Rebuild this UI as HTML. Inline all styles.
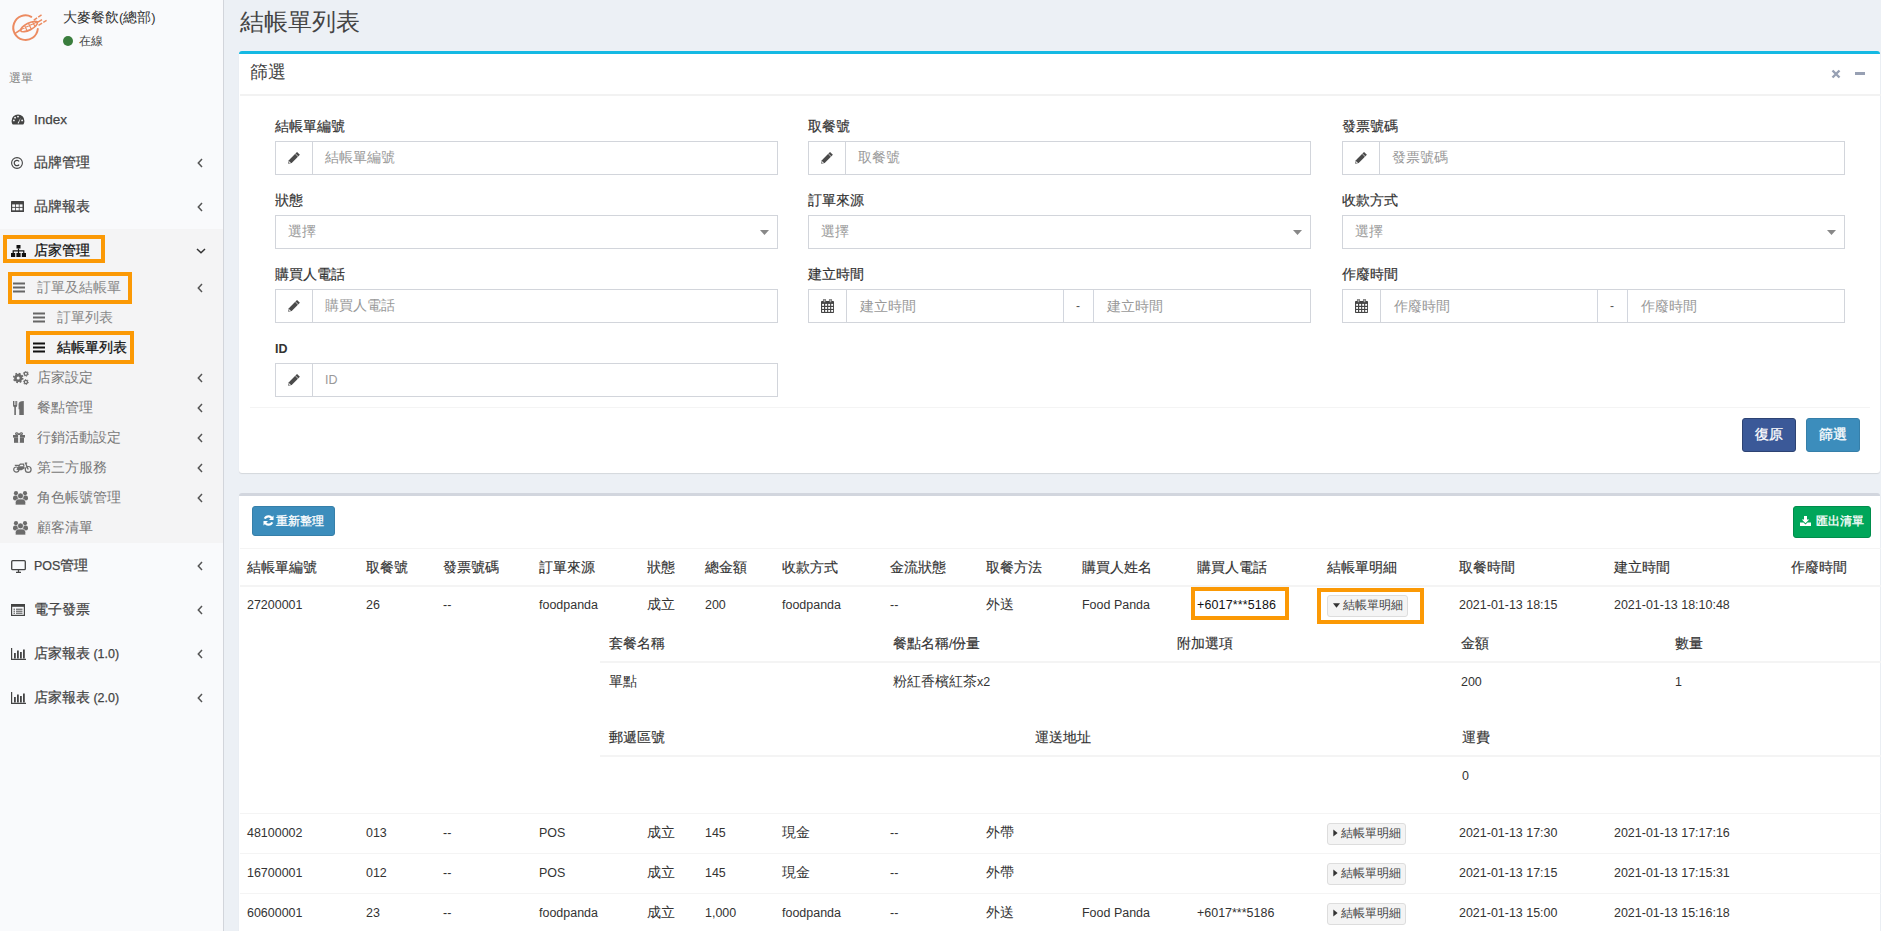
<!DOCTYPE html><html><head><meta charset="utf-8"><style>*{box-sizing:border-box;margin:0;padding:0}
html,body{width:1881px;height:931px;overflow:hidden}
body{font-family:"Liberation Sans",sans-serif;font-size:13.5px;color:#333;background:#ecf0f5;position:relative}
.abs{position:absolute}
.t{white-space:nowrap}
.L{font-size:0.925em}
.B{-webkit-text-stroke:0.3px currentColor}
#sb{position:absolute;left:0;top:0;width:224px;height:931px;background:#f9fafc;border-right:1px solid #d2d5db}
.sbact{position:absolute;left:0;top:229px;width:223px;height:314px;background:#f4f4f5}
.ob{position:absolute;border:4px solid #fb9905}
.box{position:absolute;background:#fff;border-radius:3px;box-shadow:0 1px 1px rgba(0,0,0,.1)}
.lbl{position:absolute;font-size:13.5px;color:#333;line-height:16px;-webkit-text-stroke:0.18px currentColor}
.inp{position:absolute;height:34px;border:1px solid #d2d5db;background:#fff}
.inp .add{position:absolute;left:0;top:0;width:37px;height:32px;border-right:1px solid #d2d5db}
.ph{position:absolute;color:#999;font-size:13.5px;line-height:16px}
.btn{position:absolute;color:#fff;border-radius:3px;font-size:13.5px;text-align:center}
.th{position:absolute;font-size:13.5px;color:#333;line-height:16px;-webkit-text-stroke:0.15px currentColor}
.td{position:absolute;font-size:13.5px;color:#333;line-height:16px}
.hl{position:absolute;height:1px;background:#f4f4f4}
.dbtn{position:absolute;width:81px;height:22px;border:1px solid #ddd;background:#f4f4f4;border-radius:3px}
.lbl .L{font-weight:bold;-webkit-text-stroke:0}
</style></head><body>
<div id="sb">
<div class="sbact"></div>
<svg class="abs" style="left:8px;top:9px" width="42" height="36" viewBox="0 0 42 36"><g fill="none" stroke="#ec8b61" stroke-linecap="round"><path d="M29.8 20 A12.3 12.3 0 1 1 23.3 7.8" stroke-width="2"/><path d="M7.5 24.2L13 20.5" stroke-width="1.6"/><ellipse cx="21" cy="17.6" rx="9.2" ry="3.4" transform="rotate(-27 21 17.6)" stroke-width="1.7"/><path d="M13 20.5L30 12.5M16.5 16.5L19 21.5M20.5 14.5L23 19.5M24.5 12.8L26.8 17" stroke-width="1.2"/><path d="M25.8 11.2L34.5 5.2" stroke-width="1.5" stroke-dasharray="4 1.4" stroke-linecap="butt"/><path d="M29.5 13.4L34 10.6" stroke-width="1.5" stroke-linecap="butt"/><path d="M30.5 16.3L38.6 11.4" stroke-width="1.5" stroke-dasharray="4.2 1.4" stroke-linecap="butt"/></g></svg>
<div class="abs t" style="left:63px;top:9px;font-size:14px;color:#333;line-height:17px">大麥餐飲<span class="L">(</span>總部<span class="L">)</span></div>
<div class="abs" style="left:63px;top:36px;width:10px;height:10px;border-radius:50%;background:#3a7d3d"></div>
<div class="abs t" style="left:79px;top:33px;font-size:12px;color:#444;line-height:16px">在線</div>
<div class="abs t" style="left:9px;top:70px;font-size:12px;color:#848484;line-height:16px">選單</div>
<div class="abs t" style="left:34px;top:112px;font-size:13.5px;line-height:16px;color:#444;-webkit-text-stroke:0.25px currentColor"><span style="font-size:14.6px;position:relative;top:-1px"><span class="L">Index</span></span></div>
<div class="abs" style="left:11px;top:114px;line-height:0"><svg width="14" height="11" viewBox="0 0 15 12"><path d="M7.5 0.5A7 7 0 0 0 0.5 7.5c0 1.6.5 3 1.4 4h11.2c.9-1 1.4-2.4 1.4-4A7 7 0 0 0 7.5.5z" fill="#444"/><circle cx="3" cy="7" r="1" fill="#f9fafc"/><circle cx="4.3" cy="4" r="1" fill="#f9fafc"/><circle cx="7.5" cy="2.8" r="1" fill="#f9fafc"/><circle cx="12" cy="7" r="1" fill="#f9fafc"/><path d="M7 10L10.5 4.2L8.2 10.3z" fill="#f9fafc"/></svg></div>
<div class="abs t" style="left:34px;top:155px;font-size:13.5px;line-height:16px;color:#444;-webkit-text-stroke:0.25px currentColor">品牌管理</div>
<div class="abs" style="left:11px;top:157px;line-height:0"><svg width="12" height="12" viewBox="0 0 12 12"><circle cx="6" cy="6" r="5.4" fill="none" stroke="#444" stroke-width="1.1"/><path d="M8.1 4.4A2.7 2.7 0 1 0 8.1 7.6" fill="none" stroke="#444" stroke-width="1.2"/></svg></div>
<div class="abs" style="left:197px;top:158px;line-height:0"><svg width="6" height="10" viewBox="0 0 6 10"><path d="M5 1L1.3 5L5 9" fill="none" stroke="#555" stroke-width="1.5"/></svg></div>
<div class="abs t" style="left:34px;top:199px;font-size:13.5px;line-height:16px;color:#444;-webkit-text-stroke:0.25px currentColor">品牌報表</div>
<div class="abs" style="left:11px;top:201px;line-height:0"><svg width="13" height="11" viewBox="0 0 13 11"><rect x="0" y="0" width="13" height="11" rx="0.6" fill="#444"/><rect x="1.2" y="3.4" width="2.9" height="2.5" fill="#f9fafc"/><rect x="1.2" y="6.8" width="2.9" height="2.5" fill="#f9fafc"/><rect x="4.9" y="3.4" width="2.9" height="2.5" fill="#f9fafc"/><rect x="4.9" y="6.8" width="2.9" height="2.5" fill="#f9fafc"/><rect x="8.6" y="3.4" width="2.9" height="2.5" fill="#f9fafc"/><rect x="8.6" y="6.8" width="2.9" height="2.5" fill="#f9fafc"/></svg></div>
<div class="abs" style="left:197px;top:202px;line-height:0"><svg width="6" height="10" viewBox="0 0 6 10"><path d="M5 1L1.3 5L5 9" fill="none" stroke="#555" stroke-width="1.5"/></svg></div>
<div class="abs t" style="left:34px;top:243px;font-size:13.5px;line-height:16px;color:#111;-webkit-text-stroke:0.25px currentColor">店家管理</div>
<div class="abs" style="left:11px;top:245px;line-height:0"><svg width="15" height="12" viewBox="0 0 15 12"><rect x="5.5" y="0" width="4" height="3.5" fill="#111"/><path d="M7.5 3.5V6M2.2 8V5.8H12.8V8M7.5 6V8" stroke="#111" stroke-width="1.2" fill="none"/><rect x="0" y="8" width="4.2" height="4" fill="#111"/><rect x="5.4" y="8" width="4.2" height="4" fill="#111"/><rect x="10.8" y="8" width="4.2" height="4" fill="#111"/></svg></div>
<div class="abs" style="left:196px;top:248px;line-height:0"><svg width="10" height="6" viewBox="0 0 10 6"><path d="M1 1L5 4.7L9 1" fill="none" stroke="#333" stroke-width="1.5"/></svg></div>
<div class="abs t" style="left:37px;top:280px;font-size:13.5px;line-height:16px;color:#888;">訂單及結帳單</div>
<div class="abs" style="left:13px;top:282px;line-height:0"><svg width="12" height="11" viewBox="0 0 12 11"><rect x="0" y="0.5" width="12" height="2" fill="#666"/><rect x="0" y="4.5" width="12" height="2" fill="#666"/><rect x="0" y="8.5" width="12" height="2" fill="#666"/></svg></div>
<div class="abs" style="left:197px;top:283px;line-height:0"><svg width="6" height="10" viewBox="0 0 6 10"><path d="M5 1L1.3 5L5 9" fill="none" stroke="#555" stroke-width="1.5"/></svg></div>
<div class="abs t" style="left:57px;top:310px;font-size:13.5px;line-height:16px;color:#888;">訂單列表</div>
<div class="abs" style="left:33px;top:312px;line-height:0"><svg width="12" height="11" viewBox="0 0 12 11"><rect x="0" y="0.5" width="12" height="2" fill="#666"/><rect x="0" y="4.5" width="12" height="2" fill="#666"/><rect x="0" y="8.5" width="12" height="2" fill="#666"/></svg></div>
<div class="abs t" style="left:57px;top:340px;font-size:13.5px;line-height:16px;color:#111;-webkit-text-stroke:0.25px currentColor">結帳單列表</div>
<div class="abs" style="left:33px;top:342px;line-height:0"><svg width="12" height="11" viewBox="0 0 12 11"><rect x="0" y="0.5" width="12" height="2" fill="#111"/><rect x="0" y="4.5" width="12" height="2" fill="#111"/><rect x="0" y="8.5" width="12" height="2" fill="#111"/></svg></div>
<div class="abs t" style="left:37px;top:370px;font-size:13.5px;line-height:16px;color:#777;">店家設定</div>
<div class="abs" style="left:13px;top:371px;line-height:0"><svg width="16" height="14" viewBox="0 0 16 14"><circle cx="5.2" cy="6.9" r="2.8" fill="none" stroke="#6b6b6b" stroke-width="2.6"/><circle cx="5.2" cy="6.9" r="4.5" fill="none" stroke="#6b6b6b" stroke-width="1.6" stroke-dasharray="1.77 1.77"/><circle cx="12.9" cy="2.7" r="1.6" fill="none" stroke="#6b6b6b" stroke-width="1.3"/><circle cx="12.9" cy="2.7" r="2.5" fill="none" stroke="#6b6b6b" stroke-width="0.9" stroke-dasharray="1.3 1.3"/><circle cx="12.9" cy="11" r="1.6" fill="none" stroke="#6b6b6b" stroke-width="1.3"/><circle cx="12.9" cy="11" r="2.5" fill="none" stroke="#6b6b6b" stroke-width="0.9" stroke-dasharray="1.3 1.3"/></svg></div>
<div class="abs" style="left:197px;top:373px;line-height:0"><svg width="6" height="10" viewBox="0 0 6 10"><path d="M5 1L1.3 5L5 9" fill="none" stroke="#555" stroke-width="1.5"/></svg></div>
<div class="abs t" style="left:37px;top:400px;font-size:13.5px;line-height:16px;color:#777;">餐點管理</div>
<div class="abs" style="left:13px;top:401px;line-height:0"><svg width="11" height="14" viewBox="0 0 11 14"><path d="M0 0h1v4h0.6V0h1v4h0.6V0h1v4c0 1.2-.5 2-1.3 2.3V14H1.3V6.3C.5 6 0 5.2 0 4z" fill="#6b6b6b"/><path d="M6.3 14V8.2H5.6V3.2C5.6 1.2 7.4 0 10.8 0V14z" fill="#6b6b6b"/></svg></div>
<div class="abs" style="left:197px;top:403px;line-height:0"><svg width="6" height="10" viewBox="0 0 6 10"><path d="M5 1L1.3 5L5 9" fill="none" stroke="#555" stroke-width="1.5"/></svg></div>
<div class="abs t" style="left:37px;top:430px;font-size:13.5px;line-height:16px;color:#777;">行銷活動設定</div>
<div class="abs" style="left:13px;top:432px;line-height:0"><svg width="12" height="11" viewBox="0 0 12 11"><path d="M6 3C5 0.6 2.6 0.3 2.6 1.8 2.6 2.8 4.5 3 6 3zM6 3C7 0.6 9.4 0.3 9.4 1.8 9.4 2.8 7.5 3 6 3z" fill="none" stroke="#6b6b6b" stroke-width="1.2"/><rect x="0" y="3" width="12" height="2.6" fill="#6b6b6b"/><rect x="1" y="5.6" width="10" height="5.2" fill="#6b6b6b"/><rect x="5.1" y="3" width="1.8" height="7.8" fill="#f4f4f5"/></svg></div>
<div class="abs" style="left:197px;top:433px;line-height:0"><svg width="6" height="10" viewBox="0 0 6 10"><path d="M5 1L1.3 5L5 9" fill="none" stroke="#555" stroke-width="1.5"/></svg></div>
<div class="abs t" style="left:37px;top:460px;font-size:13.5px;line-height:16px;color:#777;">第三方服務</div>
<div class="abs" style="left:13px;top:462px;line-height:0"><svg width="19" height="11" viewBox="0 0 19 11"><circle cx="3.3" cy="7.6" r="2.6" fill="none" stroke="#6b6b6b" stroke-width="1.2"/><circle cx="15.2" cy="7.4" r="2.9" fill="none" stroke="#6b6b6b" stroke-width="1.2"/><path d="M3.3 7.6L5.5 4.3H11L12 6.3 8.5 8.3H5z" fill="#6b6b6b"/><path d="M1.8 3.3H6.5M11.8 1.2H14.2M12.6 1.2L15.2 7.4M5.5 4.3L7.3 2.2H10.5L11 4.3" fill="none" stroke="#6b6b6b" stroke-width="1.3"/></svg></div>
<div class="abs" style="left:197px;top:463px;line-height:0"><svg width="6" height="10" viewBox="0 0 6 10"><path d="M5 1L1.3 5L5 9" fill="none" stroke="#555" stroke-width="1.5"/></svg></div>
<div class="abs t" style="left:37px;top:490px;font-size:13.5px;line-height:16px;color:#777;">角色帳號管理</div>
<div class="abs" style="left:13px;top:491px;line-height:0"><svg width="15" height="14" viewBox="0 0 15 14"><circle cx="3" cy="2.2" r="2.1" fill="#6b6b6b"/><circle cx="12" cy="2.2" r="2.1" fill="#6b6b6b"/><rect x="0" y="4.6" width="5.2" height="4.8" rx="2.2" fill="#6b6b6b"/><rect x="9.8" y="4.6" width="5.2" height="4.8" rx="2.2" fill="#6b6b6b"/><circle cx="7.5" cy="4.9" r="3" fill="#6b6b6b" stroke="#f4f4f5" stroke-width="0.7"/><path d="M2.3 14V11.3C2.3 9.3 3.8 8 5.8 8H9.2C11.2 8 12.7 9.3 12.7 11.3V14z" fill="#6b6b6b" stroke="#f4f4f5" stroke-width="0.7"/></svg></div>
<div class="abs" style="left:197px;top:493px;line-height:0"><svg width="6" height="10" viewBox="0 0 6 10"><path d="M5 1L1.3 5L5 9" fill="none" stroke="#555" stroke-width="1.5"/></svg></div>
<div class="abs t" style="left:37px;top:520px;font-size:13.5px;line-height:16px;color:#777;">顧客清單</div>
<div class="abs" style="left:13px;top:521px;line-height:0"><svg width="15" height="14" viewBox="0 0 15 14"><circle cx="3" cy="2.2" r="2.1" fill="#6b6b6b"/><circle cx="12" cy="2.2" r="2.1" fill="#6b6b6b"/><rect x="0" y="4.6" width="5.2" height="4.8" rx="2.2" fill="#6b6b6b"/><rect x="9.8" y="4.6" width="5.2" height="4.8" rx="2.2" fill="#6b6b6b"/><circle cx="7.5" cy="4.9" r="3" fill="#6b6b6b" stroke="#f4f4f5" stroke-width="0.7"/><path d="M2.3 14V11.3C2.3 9.3 3.8 8 5.8 8H9.2C11.2 8 12.7 9.3 12.7 11.3V14z" fill="#6b6b6b" stroke="#f4f4f5" stroke-width="0.7"/></svg></div>
<div class="abs t" style="left:34px;top:558px;font-size:13.5px;line-height:16px;color:#444;-webkit-text-stroke:0.25px currentColor"><span class="L">POS</span>管理</div>
<div class="abs" style="left:11px;top:560px;line-height:0"><svg width="15" height="13" viewBox="0 0 15 13"><rect x="0.7" y="0.7" width="13.6" height="9" rx="1" fill="none" stroke="#444" stroke-width="1.3"/><path d="M5 12.5h5M7.5 9.7v2.8" stroke="#444" stroke-width="1.3"/></svg></div>
<div class="abs" style="left:197px;top:561px;line-height:0"><svg width="6" height="10" viewBox="0 0 6 10"><path d="M5 1L1.3 5L5 9" fill="none" stroke="#555" stroke-width="1.5"/></svg></div>
<div class="abs t" style="left:34px;top:602px;font-size:13.5px;line-height:16px;color:#444;-webkit-text-stroke:0.25px currentColor">電子發票</div>
<div class="abs" style="left:11px;top:604px;line-height:0"><svg width="14" height="12" viewBox="0 0 14 12"><rect x="0.6" y="0.6" width="12.8" height="10.8" fill="none" stroke="#444" stroke-width="1.2"/><rect x="0.6" y="0.6" width="12.8" height="2.2" fill="#444"/><path d="M2.5 5.2h1.5M5 5.2h6.5M2.5 7.2h1.5M5 7.2h6.5M2.5 9.2h1.5M5 9.2h6.5" stroke="#444" stroke-width="1"/></svg></div>
<div class="abs" style="left:197px;top:605px;line-height:0"><svg width="6" height="10" viewBox="0 0 6 10"><path d="M5 1L1.3 5L5 9" fill="none" stroke="#555" stroke-width="1.5"/></svg></div>
<div class="abs t" style="left:34px;top:646px;font-size:13.5px;line-height:16px;color:#444;-webkit-text-stroke:0.25px currentColor">店家報表<span class="L"> (1.0)</span></div>
<div class="abs" style="left:11px;top:648px;line-height:0"><svg width="15" height="12" viewBox="0 0 15 12"><path d="M0.6 0V11.4H15" fill="none" stroke="#444" stroke-width="1.2"/><rect x="3" y="5" width="1.8" height="5.5" fill="#444"/><rect x="6" y="2.5" width="1.8" height="8" fill="#444"/><rect x="9" y="4" width="1.8" height="6.5" fill="#444"/><rect x="12" y="1.5" width="1.8" height="9" fill="#444"/></svg></div>
<div class="abs" style="left:197px;top:649px;line-height:0"><svg width="6" height="10" viewBox="0 0 6 10"><path d="M5 1L1.3 5L5 9" fill="none" stroke="#555" stroke-width="1.5"/></svg></div>
<div class="abs t" style="left:34px;top:690px;font-size:13.5px;line-height:16px;color:#444;-webkit-text-stroke:0.25px currentColor">店家報表<span class="L"> (2.0)</span></div>
<div class="abs" style="left:11px;top:692px;line-height:0"><svg width="15" height="12" viewBox="0 0 15 12"><path d="M0.6 0V11.4H15" fill="none" stroke="#444" stroke-width="1.2"/><rect x="3" y="5" width="1.8" height="5.5" fill="#444"/><rect x="6" y="2.5" width="1.8" height="8" fill="#444"/><rect x="9" y="4" width="1.8" height="6.5" fill="#444"/><rect x="12" y="1.5" width="1.8" height="9" fill="#444"/></svg></div>
<div class="abs" style="left:197px;top:693px;line-height:0"><svg width="6" height="10" viewBox="0 0 6 10"><path d="M5 1L1.3 5L5 9" fill="none" stroke="#555" stroke-width="1.5"/></svg></div>
<div class="ob" style="left:3px;top:235px;width:102px;height:28px"></div>
<div class="ob" style="left:8px;top:272px;width:124px;height:32px"></div>
<div class="ob" style="left:26px;top:331px;width:108px;height:33px"></div>
</div>
<div class="abs t" style="left:240px;top:6.5px;font-size:23.7px;line-height:30px;color:#444">結帳單列表</div>
<div class="box" style="left:239px;top:51px;width:1641px;height:422px;border-top:3px solid #14b9e3"></div>
<div class="abs t" style="left:250px;top:61px;font-size:18px;line-height:22px;color:#444">篩選</div>
<div class="abs" style="left:240px;top:94px;width:1641px;height:2px;background:#f2f2f2"></div>
<svg class="abs" style="left:1831px;top:69px" width="10" height="10" viewBox="0 0 10 10"><path d="M1.5 1.5L8.5 8.5M8.5 1.5L1.5 8.5" stroke="#97a0b3" stroke-width="2.4"/></svg>
<div class="abs" style="left:1855px;top:72px;width:10px;height:2.5px;background:#97a0b3"></div>
<div class="lbl t" style="left:275px;top:119px">結帳單編號</div>
<div class="inp" style="left:275px;top:141px;width:503px"><div class="add"></div></div>
<div class="abs" style="left:288px;top:152px;line-height:0"><svg width="12" height="12" viewBox="0 0 12 12"><path d="M9.02 -0.05L11.88 2.75L3.73 11.06L0.2 11.8L0.87 8.26z" fill="#4a4a4a"/><path d="M7.27 1.735L10.13 4.535" stroke="#fff" stroke-width="0.7"/><path d="M1.3 9.2L2.9 10.7L1.6 11L1 10.4z" fill="#fff"/></svg></div>
<div class="ph t" style="left:325px;top:150px">結帳單編號</div>
<div class="lbl t" style="left:808px;top:119px">取餐號</div>
<div class="inp" style="left:808px;top:141px;width:503px"><div class="add"></div></div>
<div class="abs" style="left:821px;top:152px;line-height:0"><svg width="12" height="12" viewBox="0 0 12 12"><path d="M9.02 -0.05L11.88 2.75L3.73 11.06L0.2 11.8L0.87 8.26z" fill="#4a4a4a"/><path d="M7.27 1.735L10.13 4.535" stroke="#fff" stroke-width="0.7"/><path d="M1.3 9.2L2.9 10.7L1.6 11L1 10.4z" fill="#fff"/></svg></div>
<div class="ph t" style="left:858px;top:150px">取餐號</div>
<div class="lbl t" style="left:1342px;top:119px">發票號碼</div>
<div class="inp" style="left:1342px;top:141px;width:503px"><div class="add"></div></div>
<div class="abs" style="left:1355px;top:152px;line-height:0"><svg width="12" height="12" viewBox="0 0 12 12"><path d="M9.02 -0.05L11.88 2.75L3.73 11.06L0.2 11.8L0.87 8.26z" fill="#4a4a4a"/><path d="M7.27 1.735L10.13 4.535" stroke="#fff" stroke-width="0.7"/><path d="M1.3 9.2L2.9 10.7L1.6 11L1 10.4z" fill="#fff"/></svg></div>
<div class="ph t" style="left:1392px;top:150px">發票號碼</div>
<div class="lbl t" style="left:275px;top:193px">狀態</div>
<div class="inp" style="left:275px;top:215px;width:503px"></div>
<div class="ph t" style="left:288px;top:224px">選擇</div>
<svg class="abs" style="left:760px;top:230px" width="9" height="5" viewBox="0 0 9 5"><path d="M0 0H9L4.5 5z" fill="#888"/></svg>
<div class="lbl t" style="left:808px;top:193px">訂單來源</div>
<div class="inp" style="left:808px;top:215px;width:503px"></div>
<div class="ph t" style="left:821px;top:224px">選擇</div>
<svg class="abs" style="left:1293px;top:230px" width="9" height="5" viewBox="0 0 9 5"><path d="M0 0H9L4.5 5z" fill="#888"/></svg>
<div class="lbl t" style="left:1342px;top:193px">收款方式</div>
<div class="inp" style="left:1342px;top:215px;width:503px"></div>
<div class="ph t" style="left:1355px;top:224px">選擇</div>
<svg class="abs" style="left:1827px;top:230px" width="9" height="5" viewBox="0 0 9 5"><path d="M0 0H9L4.5 5z" fill="#888"/></svg>
<div class="lbl t" style="left:275px;top:267px">購買人電話</div>
<div class="inp" style="left:275px;top:289px;width:503px"><div class="add"></div></div>
<div class="abs" style="left:288px;top:300px;line-height:0"><svg width="12" height="12" viewBox="0 0 12 12"><path d="M9.02 -0.05L11.88 2.75L3.73 11.06L0.2 11.8L0.87 8.26z" fill="#4a4a4a"/><path d="M7.27 1.735L10.13 4.535" stroke="#fff" stroke-width="0.7"/><path d="M1.3 9.2L2.9 10.7L1.6 11L1 10.4z" fill="#fff"/></svg></div>
<div class="ph t" style="left:325px;top:298px">購買人電話</div>
<div class="lbl t" style="left:808px;top:267px">建立時間</div>
<div class="inp" style="left:808px;top:289px;width:503px"><div class="add" style="width:38px"></div></div>
<div class="abs" style="left:1063px;top:290px;width:1px;height:32px;background:#d2d6de"></div>
<div class="abs" style="left:1093px;top:290px;width:1px;height:32px;background:#d2d6de"></div>
<div class="abs" style="left:821px;top:299px;line-height:0"><svg width="13" height="14" viewBox="0 0 13 14"><rect x="0" y="2" width="13" height="12" rx="0.8" fill="#444"/><g fill="#fff"><rect x="1.1" y="4.9" width="1.9" height="1.9"/><rect x="1.1" y="8.0" width="1.9" height="1.9"/><rect x="1.1" y="11.0" width="1.9" height="1.9"/><rect x="4.2" y="4.9" width="1.9" height="1.9"/><rect x="4.2" y="8.0" width="1.9" height="1.9"/><rect x="4.2" y="11.0" width="1.9" height="1.9"/><rect x="7.2" y="4.9" width="1.9" height="1.9"/><rect x="7.2" y="8.0" width="1.9" height="1.9"/><rect x="7.2" y="11.0" width="1.9" height="1.9"/><rect x="10.2" y="4.9" width="1.9" height="1.9"/><rect x="10.2" y="8.0" width="1.9" height="1.9"/><rect x="10.2" y="11.0" width="1.9" height="1.9"/></g><rect x="2.4" y="0" width="2.2" height="3.6" rx="0.8" fill="#aaa" stroke="#444" stroke-width="0.6"/><rect x="8.4" y="0" width="2.2" height="3.6" rx="0.8" fill="#aaa" stroke="#444" stroke-width="0.6"/></svg></div>
<div class="ph t" style="left:860px;top:299px">建立時間</div>
<div class="abs t" style="left:1076px;top:298px;font-size:13px;line-height:16px;color:#555"><span class="L">-</span></div>
<div class="ph t" style="left:1107px;top:299px">建立時間</div>
<div class="lbl t" style="left:1342px;top:267px">作廢時間</div>
<div class="inp" style="left:1342px;top:289px;width:503px"><div class="add" style="width:38px"></div></div>
<div class="abs" style="left:1597px;top:290px;width:1px;height:32px;background:#d2d6de"></div>
<div class="abs" style="left:1627px;top:290px;width:1px;height:32px;background:#d2d6de"></div>
<div class="abs" style="left:1355px;top:299px;line-height:0"><svg width="13" height="14" viewBox="0 0 13 14"><rect x="0" y="2" width="13" height="12" rx="0.8" fill="#444"/><g fill="#fff"><rect x="1.1" y="4.9" width="1.9" height="1.9"/><rect x="1.1" y="8.0" width="1.9" height="1.9"/><rect x="1.1" y="11.0" width="1.9" height="1.9"/><rect x="4.2" y="4.9" width="1.9" height="1.9"/><rect x="4.2" y="8.0" width="1.9" height="1.9"/><rect x="4.2" y="11.0" width="1.9" height="1.9"/><rect x="7.2" y="4.9" width="1.9" height="1.9"/><rect x="7.2" y="8.0" width="1.9" height="1.9"/><rect x="7.2" y="11.0" width="1.9" height="1.9"/><rect x="10.2" y="4.9" width="1.9" height="1.9"/><rect x="10.2" y="8.0" width="1.9" height="1.9"/><rect x="10.2" y="11.0" width="1.9" height="1.9"/></g><rect x="2.4" y="0" width="2.2" height="3.6" rx="0.8" fill="#aaa" stroke="#444" stroke-width="0.6"/><rect x="8.4" y="0" width="2.2" height="3.6" rx="0.8" fill="#aaa" stroke="#444" stroke-width="0.6"/></svg></div>
<div class="ph t" style="left:1394px;top:299px">作廢時間</div>
<div class="abs t" style="left:1610px;top:298px;font-size:13px;line-height:16px;color:#555"><span class="L">-</span></div>
<div class="ph t" style="left:1641px;top:299px">作廢時間</div>
<div class="lbl t" style="left:275px;top:341px"><span class="L">ID</span></div>
<div class="inp" style="left:275px;top:363px;width:503px"><div class="add"></div></div>
<div class="abs" style="left:288px;top:374px;line-height:0"><svg width="12" height="12" viewBox="0 0 12 12"><path d="M9.02 -0.05L11.88 2.75L3.73 11.06L0.2 11.8L0.87 8.26z" fill="#4a4a4a"/><path d="M7.27 1.735L10.13 4.535" stroke="#fff" stroke-width="0.7"/><path d="M1.3 9.2L2.9 10.7L1.6 11L1 10.4z" fill="#fff"/></svg></div>
<div class="ph t" style="left:325px;top:372px"><span class="L">ID</span></div>
<div class="abs" style="left:250px;top:407px;width:1620px;height:1px;background:#f4f4f4"></div>
<div class="btn t" style="left:1742px;top:418px;width:54px;height:34px;line-height:32px;background:#3b5998;border:1px solid #2d4373;-webkit-text-stroke:0.3px #fff">復原</div>
<div class="btn t" style="left:1806px;top:418px;width:54px;height:34px;line-height:32px;background:#3c8dbc;border:1px solid #367fa9;-webkit-text-stroke:0.3px #fff">篩選</div>
<div class="box" style="left:239px;top:493px;width:1641px;height:450px;border-top:3px solid #d2d6de"></div>
<div class="btn t" style="left:252px;top:506px;width:83px;height:30px;line-height:28px;background:#3c8dbc;border:1px solid #367fa9;text-align:left;padding-left:10px">&nbsp;</div>
<div class="abs" style="left:263px;top:515px;line-height:0"><svg width="11" height="11" viewBox="0 0 11 11"><path d="M9.2 4A4 4 0 0 0 1.8 3.6M1.8 7A4 4 0 0 0 9.2 7.4" fill="none" stroke="#fff" stroke-width="2.2"/><path d="M10.5 0.5V5H6z" fill="#fff"/><path d="M0.5 10.5V6H5z" fill="#fff"/></svg></div>
<div class="abs t B" style="left:276px;top:513px;font-size:12px;line-height:16px;color:#fff">重新整理</div>
<div class="btn" style="left:1793px;top:506px;width:78px;height:32px;background:#00a65a;border:1px solid #008d4c"></div>
<div class="abs" style="left:1800px;top:516px;line-height:0"><svg width="11" height="10" viewBox="0 0 11 10"><path d="M4 0h3v3.5h2.2L5.5 7.3 1.8 3.5H4z" fill="#fff"/><path d="M0 6.5h3.5L5.5 8.5 7.5 6.5H11V10H0z" fill="#fff"/></svg></div>
<div class="abs t B" style="left:1816px;top:513px;font-size:12px;line-height:16px;color:#fff">匯出清單</div>
<div class="hl" style="left:240px;top:548px;width:1641px"></div>
<div class="th t" style="left:247px;top:560px">結帳單編號</div>
<div class="th t" style="left:366px;top:560px">取餐號</div>
<div class="th t" style="left:443px;top:560px">發票號碼</div>
<div class="th t" style="left:539px;top:560px">訂單來源</div>
<div class="th t" style="left:647px;top:560px">狀態</div>
<div class="th t" style="left:705px;top:560px">總金額</div>
<div class="th t" style="left:782px;top:560px">收款方式</div>
<div class="th t" style="left:890px;top:560px">金流狀態</div>
<div class="th t" style="left:986px;top:560px">取餐方法</div>
<div class="th t" style="left:1082px;top:560px">購買人姓名</div>
<div class="th t" style="left:1197px;top:560px">購買人電話</div>
<div class="th t" style="left:1327px;top:560px">結帳單明細</div>
<div class="th t" style="left:1459px;top:560px">取餐時間</div>
<div class="th t" style="left:1614px;top:560px">建立時間</div>
<div class="th t" style="left:1791px;top:560px">作廢時間</div>
<div class="hl" style="left:240px;top:585px;width:1641px;height:2px"></div>
<div class="td t" style="left:247px;top:597px"><span class="L">27200001</span></div>
<div class="td t" style="left:366px;top:597px"><span class="L">26</span></div>
<div class="td t" style="left:443px;top:597px"><span class="L">--</span></div>
<div class="td t" style="left:539px;top:597px"><span class="L">foodpanda</span></div>
<div class="td t" style="left:647px;top:597px">成立</div>
<div class="td t" style="left:705px;top:597px"><span class="L">200</span></div>
<div class="td t" style="left:782px;top:597px"><span class="L">foodpanda</span></div>
<div class="td t" style="left:890px;top:597px"><span class="L">--</span></div>
<div class="td t" style="left:986px;top:597px">外送</div>
<div class="td t" style="left:1082px;top:597px"><span class="L">Food Panda</span></div>
<div class="td t" style="left:1197px;top:597px;color:#111;letter-spacing:0.15px"><span class="L">+6017***5186</span></div>
<div class="dbtn" style="left:1327px;top:595px;width:81px"></div>
<div class="abs" style="left:1333px;top:603px;line-height:0"><svg width="7" height="5" viewBox="0 0 7 5"><path d="M0 0.3H7L3.5 4.7z" fill="#333"/></svg></div>
<div class="abs t" style="left:1343px;top:597px;font-size:12px;line-height:16px;color:#444">結帳單明細</div>
<div class="td t" style="left:1459px;top:597px"><span class="L">2021-01-13 18:15</span></div>
<div class="td t" style="left:1614px;top:597px"><span class="L">2021-01-13 18:10:48</span></div>
<div class="th t" style="left:609px;top:636px">套餐名稱</div>
<div class="th t" style="left:893px;top:636px">餐點名稱<span class="L">/</span>份量</div>
<div class="th t" style="left:1177px;top:636px">附加選項</div>
<div class="th t" style="left:1461px;top:636px">金額</div>
<div class="th t" style="left:1675px;top:636px">數量</div>
<div class="hl" style="left:600px;top:661px;width:1281px;height:2px"></div>
<div class="td t" style="left:609px;top:674px">單點</div>
<div class="td t" style="left:893px;top:674px">粉紅香檳紅茶<span class="L">x2</span></div>
<div class="td t" style="left:1461px;top:674px"><span class="L">200</span></div>
<div class="td t" style="left:1675px;top:674px"><span class="L">1</span></div>
<div class="th t" style="left:609px;top:730px">郵遞區號</div>
<div class="th t" style="left:1035px;top:730px">運送地址</div>
<div class="th t" style="left:1462px;top:730px">運費</div>
<div class="hl" style="left:600px;top:755px;width:1281px;height:2px"></div>
<div class="td t" style="left:1462px;top:768px"><span class="L">0</span></div>
<div class="ob" style="left:1191px;top:587px;width:98px;height:33px"></div>
<div class="ob" style="left:1317px;top:588px;width:107px;height:36px"></div>
<div class="hl" style="left:240px;top:813px;width:1641px"></div>
<div class="td t" style="left:247px;top:825px"><span class="L">48100002</span></div>
<div class="td t" style="left:366px;top:825px"><span class="L">013</span></div>
<div class="td t" style="left:443px;top:825px"><span class="L">--</span></div>
<div class="td t" style="left:539px;top:825px"><span class="L">POS</span></div>
<div class="td t" style="left:647px;top:825px">成立</div>
<div class="td t" style="left:705px;top:825px"><span class="L">145</span></div>
<div class="td t" style="left:782px;top:825px">現金</div>
<div class="td t" style="left:890px;top:825px"><span class="L">--</span></div>
<div class="td t" style="left:986px;top:825px">外帶</div>
<div class="dbtn" style="left:1327px;top:823px;width:79px"></div>
<div class="abs" style="left:1333px;top:829px;line-height:0"><svg width="5" height="8" viewBox="0 0 5 8"><path d="M0.3 0.5L4.6 4L0.3 7.5z" fill="#333"/></svg></div>
<div class="abs t" style="left:1341px;top:825px;font-size:12px;line-height:16px;color:#444">結帳單明細</div>
<div class="td t" style="left:1459px;top:825px"><span class="L">2021-01-13 17:30</span></div>
<div class="td t" style="left:1614px;top:825px"><span class="L">2021-01-13 17:17:16</span></div>
<div class="hl" style="left:240px;top:853px;width:1641px"></div>
<div class="td t" style="left:247px;top:865px"><span class="L">16700001</span></div>
<div class="td t" style="left:366px;top:865px"><span class="L">012</span></div>
<div class="td t" style="left:443px;top:865px"><span class="L">--</span></div>
<div class="td t" style="left:539px;top:865px"><span class="L">POS</span></div>
<div class="td t" style="left:647px;top:865px">成立</div>
<div class="td t" style="left:705px;top:865px"><span class="L">145</span></div>
<div class="td t" style="left:782px;top:865px">現金</div>
<div class="td t" style="left:890px;top:865px"><span class="L">--</span></div>
<div class="td t" style="left:986px;top:865px">外帶</div>
<div class="dbtn" style="left:1327px;top:863px;width:79px"></div>
<div class="abs" style="left:1333px;top:869px;line-height:0"><svg width="5" height="8" viewBox="0 0 5 8"><path d="M0.3 0.5L4.6 4L0.3 7.5z" fill="#333"/></svg></div>
<div class="abs t" style="left:1341px;top:865px;font-size:12px;line-height:16px;color:#444">結帳單明細</div>
<div class="td t" style="left:1459px;top:865px"><span class="L">2021-01-13 17:15</span></div>
<div class="td t" style="left:1614px;top:865px"><span class="L">2021-01-13 17:15:31</span></div>
<div class="hl" style="left:240px;top:893px;width:1641px"></div>
<div class="td t" style="left:247px;top:905px"><span class="L">60600001</span></div>
<div class="td t" style="left:366px;top:905px"><span class="L">23</span></div>
<div class="td t" style="left:443px;top:905px"><span class="L">--</span></div>
<div class="td t" style="left:539px;top:905px"><span class="L">foodpanda</span></div>
<div class="td t" style="left:647px;top:905px">成立</div>
<div class="td t" style="left:705px;top:905px"><span class="L">1,000</span></div>
<div class="td t" style="left:782px;top:905px"><span class="L">foodpanda</span></div>
<div class="td t" style="left:890px;top:905px"><span class="L">--</span></div>
<div class="td t" style="left:986px;top:905px">外送</div>
<div class="td t" style="left:1082px;top:905px"><span class="L">Food Panda</span></div>
<div class="td t" style="left:1197px;top:905px"><span class="L">+6017***5186</span></div>
<div class="dbtn" style="left:1327px;top:903px;width:79px"></div>
<div class="abs" style="left:1333px;top:909px;line-height:0"><svg width="5" height="8" viewBox="0 0 5 8"><path d="M0.3 0.5L4.6 4L0.3 7.5z" fill="#333"/></svg></div>
<div class="abs t" style="left:1341px;top:905px;font-size:12px;line-height:16px;color:#444">結帳單明細</div>
<div class="td t" style="left:1459px;top:905px"><span class="L">2021-01-13 15:00</span></div>
<div class="td t" style="left:1614px;top:905px"><span class="L">2021-01-13 15:16:18</span></div>
</body></html>
